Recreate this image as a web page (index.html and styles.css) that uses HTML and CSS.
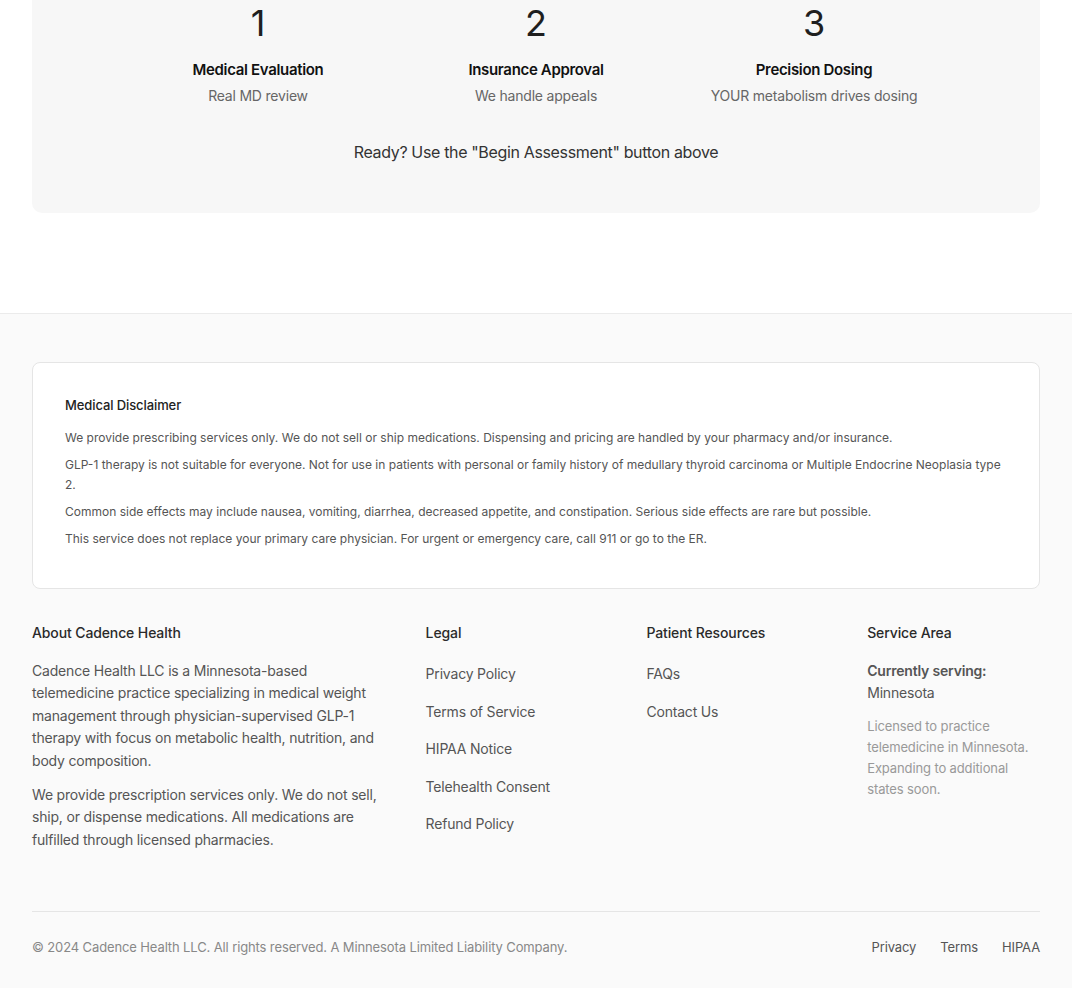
FILE: index.html
```html
<!DOCTYPE html>
<html lang="en">
<head>
<meta charset="utf-8">
<title>Cadence Health</title>
<link rel="stylesheet" href="styles.css">
</head>
<body>
<main class="page">
  <section class="steps-card">
    <div class="steps">
      <div class="step">
        <div class="step-num">1</div>
        <h3 class="step-title">Medical Evaluation</h3>
        <p class="step-sub">Real MD review</p>
      </div>
      <div class="step">
        <div class="step-num">2</div>
        <h3 class="step-title">Insurance Approval</h3>
        <p class="step-sub">We handle appeals</p>
      </div>
      <div class="step">
        <div class="step-num">3</div>
        <h3 class="step-title">Precision Dosing</h3>
        <p class="step-sub">YOUR metabolism drives dosing</p>
      </div>
    </div>
    <p class="ready">Ready? Use the "Begin Assessment" button above</p>
  </section>
</main>
<footer class="footer">
  <div class="footer-inner">
    <div class="disclaimer">
      <h4 class="disclaimer-title">Medical Disclaimer</h4>
      <p>We provide prescribing services only. We do not sell or ship medications. Dispensing and pricing are handled by your pharmacy and/or insurance.</p>
      <p>GLP-1 therapy is not suitable for everyone. Not for use in patients with personal or family history of medullary thyroid carcinoma or Multiple Endocrine Neoplasia type 2.</p>
      <p>Common side effects may include nausea, vomiting, diarrhea, decreased appetite, and constipation. Serious side effects are rare but possible.</p>
      <p>This service does not replace your primary care physician. For urgent or emergency care, call 911 or go to the ER.</p>
    </div>
    <div class="cols">
      <div class="col">
        <h4 class="col-title">About Cadence Health</h4>
        <p class="about">Cadence Health LLC is a Minnesota-based telemedicine practice specializing in medical weight management through physician-supervised GLP-1 therapy with focus on metabolic health, nutrition, and body composition.</p>
        <p class="about">We provide prescription services only. We do not sell, ship, or dispense medications. All medications are fulfilled through licensed pharmacies.</p>
      </div>
      <div class="col">
        <h4 class="col-title">Legal</h4>
        <ul class="links">
          <li><a href="#">Privacy Policy</a></li>
          <li><a href="#">Terms of Service</a></li>
          <li><a href="#">HIPAA Notice</a></li>
          <li><a href="#">Telehealth Consent</a></li>
          <li><a href="#">Refund Policy</a></li>
        </ul>
      </div>
      <div class="col">
        <h4 class="col-title">Patient Resources</h4>
        <ul class="links">
          <li><a href="#">FAQs</a></li>
          <li><a href="#">Contact Us</a></li>
        </ul>
      </div>
      <div class="col">
        <h4 class="col-title">Service Area</h4>
        <p class="serving"><strong>Currently serving:</strong><br>Minnesota</p>
        <p class="licensed">Licensed to practice telemedicine in Minnesota. Expanding to additional states soon.</p>
      </div>
    </div>
    <div class="bottom">
      <p class="copy">© 2024 Cadence Health LLC. All rights reserved. A Minnesota Limited Liability Company.</p>
      <nav class="bottom-links">
        <a href="#">Privacy</a>
        <a href="#">Terms</a>
        <a href="#">HIPAA</a>
      </nav>
    </div>
  </div>
</footer>
</body>
</html>
```
FILE: styles.css
```css
* { box-sizing: border-box; }
html, body { margin: 0; padding: 0; }
body {
  font-family: Inter, "Noto Sans", "Liberation Sans", sans-serif;
  color: #222;
  background: #fff;
}
h3, h4, p, ul { margin: 0; padding: 0; }
a { text-decoration: none; color: inherit; }

.page {
  padding: 0 32px 100px;
}
.steps-card {
  background: #f7f7f7;
  border-radius: 0 0 10px 10px;
  padding: 0 32px 49px;
}
.steps {
  display: grid;
  grid-template-columns: repeat(3, 1fr);
  max-width: 834px;
  margin: 0 auto;
  text-align: center;
}
.step-num {
  font-size: 36px;
  line-height: 44px;
  font-weight: 400;
  color: #1f1f1f;
  margin-top: 1px;
}
.step-title {
  font-size: 15px;
  line-height: 22px;
  font-weight: 600;
  letter-spacing: -0.33px;
  color: #111;
  margin-top: 14px;
}
.step-sub {
  font-size: 14px;
  line-height: 20px;
  letter-spacing: -0.2px;
  color: #666;
  margin-top: 5px;
}
.ready {
  text-align: center;
  font-size: 16px;
  line-height: 24px;
  letter-spacing: -0.35px;
  color: #333;
  margin-top: 34px;
}

.footer {
  background: #fafafa;
  border-top: 1px solid #ebebeb;
  padding: 48px 32px 32px;
}
.disclaimer {
  background: #fff;
  border: 1px solid #e5e5e5;
  border-radius: 8px;
  padding: 32px 32px 32px;
}
.disclaimer-title {
  font-size: 13px;
  line-height: 20px;
  font-weight: 500;
  letter-spacing: -0.1px;
  color: #222;
  margin-bottom: 13px;
}
.disclaimer p {
  font-size: 12px;
  line-height: 20px;
  letter-spacing: 0;
  color: #555;
  margin-bottom: 7px;
}

.cols {
  display: grid;
  grid-template-columns: 2fr 1fr 1fr 1fr;
  column-gap: 48px;
  margin-top: 34px;
  padding-bottom: 60px;
  border-bottom: 1px solid #e5e5e5;
}
.col-title {
  font-size: 14px;
  line-height: 20px;
  font-weight: 500;
  letter-spacing: -0.12px;
  color: #2a2a2a;
  margin-bottom: 17px;
}
.about {
  font-size: 14px;
  line-height: 22.4px;
  letter-spacing: -0.19px;
  color: #555;
  margin-bottom: 12px;
}
.about:last-child { margin-bottom: 0; }
.links {
  list-style: none;
  display: flex;
  flex-direction: column;
  gap: 15px;
  margin-top: 20px;
}
.links li {
  font-size: 14px;
  line-height: 22.5px;
  letter-spacing: -0.19px;
  color: #555;
}
.serving {
  font-size: 14px;
  line-height: 22.4px;
  letter-spacing: -0.19px;
  color: #555;
}
.serving strong { font-weight: 600; }
.licensed {
  font-size: 13px;
  line-height: 21px;
  letter-spacing: -0.12px;
  color: #999;
  margin-top: 11px;
}

.bottom {
  display: flex;
  justify-content: space-between;
  align-items: center;
  padding-top: 25px;
}
.copy {
  font-size: 13px;
  line-height: 20px;
  letter-spacing: -0.12px;
  color: #888;
}
.bottom-links {
  display: flex;
  gap: 24px;
  font-size: 13px;
  line-height: 20px;
  letter-spacing: -0.12px;
  color: #555;
}
```
